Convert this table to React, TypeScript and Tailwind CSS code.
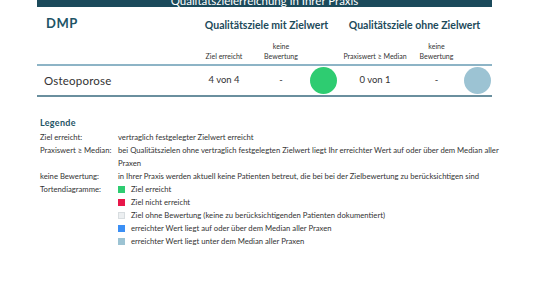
const font = { fontFamily: "Lato, 'Open Sans', sans-serif" };

function Circle({ color }: { color: string }) {
  return <div className={`h-[27px] w-[27px] rounded-full ${color}`} />;
}

const legendRows = [
  { label: "Ziel erreicht:", text: ["vertraglich festgelegter Zielwert erreicht"] },
  {
    label: "Praxiswert ≥ Median:",
    text: [
      "bei Qualitätszielen ohne vertraglich festgelegten Zielwert liegt Ihr erreichter Wert auf oder über dem Median aller",
      "Praxen",
    ],
  },
  {
    label: "keine Bewertung:",
    text: ["in Ihrer Praxis werden aktuell keine Patienten betreut, die bei bei der Zielbewertung zu berücksichtigen sind"],
  },
];

const pieLegend = [
  { color: "bg-[#2ecc71]", text: "Ziel erreicht" },
  { color: "bg-[#e8174a]", text: "Ziel nicht erreicht" },
  { color: "bg-[#eceff1] border border-[#d8dde0]", text: "Ziel ohne Bewertung (keine zu berücksichtigenden Patienten dokumentiert)" },
  { color: "bg-[#3b8ff5]", text: "erreichter Wert liegt auf oder über dem Median aller Praxen" },
  { color: "bg-[#9cc3d3]", text: "erreichter Wert liegt unter dem Median aller Praxen" },
];

export default function App() {
  return (
    <div className="h-[304px] w-[540px] bg-white text-[#333]" style={font}>
      <div className="ml-[37px] w-[455px]">
        {/* Title bar */}
        <div className="h-[7px] overflow-hidden bg-[#1b4a5b] text-center">
          <div className="-mt-[6px] text-[11.5px] leading-[13px] text-white">
            Qualitätszielerreichung in Ihrer Praxis
          </div>
        </div>

        {/* Table */}
        <div className="grid grid-cols-[159px_56px_58px_27px_76px_47px_32px]">
          <div className="row-span-2 pl-[9px] pt-[8px] text-[13px] font-bold leading-[16px] tracking-[0.5px] text-[#1e5466]">
            DMP
          </div>
          <div className="col-span-3 pt-[11px] text-center text-[10.5px] font-bold leading-[14px] text-[#1d4a5a]">
            Qualitätsziele mit Zielwert
          </div>
          <div className="col-span-3 pt-[11px] text-center text-[10.5px] font-bold leading-[14px] text-[#1d4a5a]">
            Qualitätsziele ohne Zielwert
          </div>
          <div className="flex h-[32px] items-end justify-center pb-[3px] text-[7px] leading-[10px]">Ziel erreicht</div>
          <div className="flex h-[32px] flex-col items-center justify-end pb-[3px] text-[7px] leading-[10px]">
            <span>keine</span>
            <span>Bewertung</span>
          </div>
          <div />
          <div className="flex h-[32px] items-end justify-center pb-[3px] text-[7px] leading-[10px]">Praxiswert ≥ Median</div>
          <div className="flex h-[32px] flex-col items-center justify-end pb-[3px] text-[7px] leading-[10px]">
            <span>keine</span>
            <span>Bewertung</span>
          </div>
          <div />
        </div>

        <div className="grid grid-cols-[159px_56px_58px_27px_76px_47px_32px] items-center border-y-2 border-t-[#8db4c6] border-b-[#6a8f9e] py-px text-[9.5px]">
          <div className="pl-[7px] text-[11.5px] tracking-[0.2px]">Osteoporose</div>
          <div className="text-center">4 von 4</div>
          <div className="text-center">-</div>
          <Circle color="bg-[#2ecc71]" />
          <div className="text-center">0 von 1</div>
          <div className="text-center">-</div>
          <div className="flex justify-end pr-px">
            <Circle color="bg-[#9cc3d3]" />
          </div>
        </div>
      </div>

      {/* Legend */}
      <div className="ml-[40px] mt-[20px] text-[7.7px] leading-[13px]">
        <div className="mb-[2px] text-[9px] font-bold leading-[12px] tracking-[0.3px] text-[#1e5466]">Legende</div>
        {legendRows.map((r) => (
          <div key={r.label} className="flex">
            <div className="w-[78px] shrink-0">{r.label}</div>
            <div>
              {r.text.map((t) => (
                <div key={t}>{t}</div>
              ))}
            </div>
          </div>
        ))}
        <div className="flex">
          <div className="w-[78px] shrink-0">Tortendiagramme:</div>
          <div>
            {pieLegend.map((p) => (
              <div key={p.text} className="flex items-center gap-[6px]">
                <span className={`h-[7px] w-[7px] ${p.color}`} />
                <span>{p.text}</span>
              </div>
            ))}
          </div>
        </div>
      </div>
    </div>
  );
}
